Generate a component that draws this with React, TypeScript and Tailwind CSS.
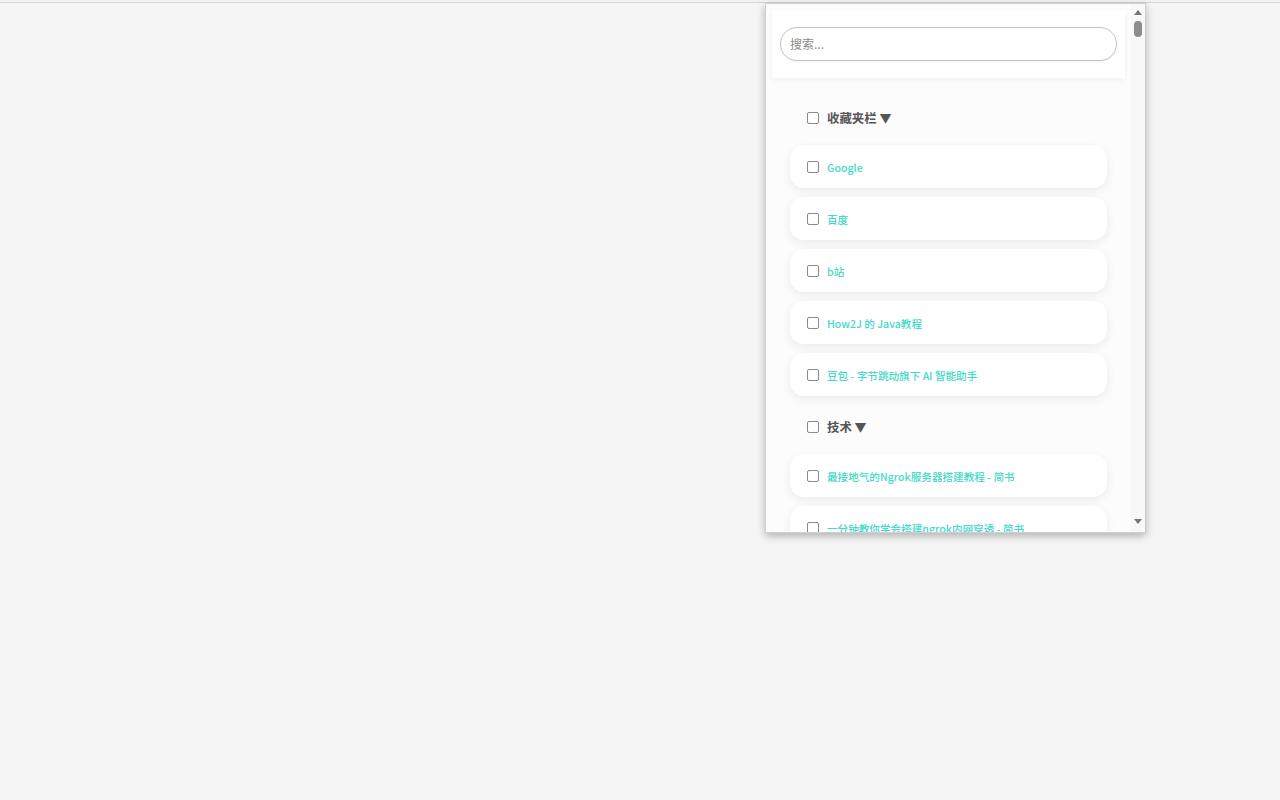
import React from 'react';

type Folder = { title: string; items: string[] };

const folders: Folder[] = [
  {
    title: '收藏夹栏',
    items: ['Google', '百度', 'b站', 'How2J 的 Java教程', '豆包 - 字节跳动旗下 AI 智能助手'],
  },
  {
    title: '技术',
    items: ['最接地气的Ngrok服务器搭建教程 - 简书', '一分钟教你学会搭建ngrok内网穿透 - 简书'],
  },
];

function Check() {
  return (
    <span className="inline-block w-[12px] h-[12px] shrink-0 rounded-[2px] border border-[#8a8a8a] bg-white" />
  );
}

export default function App() {
  return (
    <div
      className="relative w-full h-[800px] bg-[#f5f5f5] overflow-hidden"
      style={{ fontFamily: '"Noto Sans CJK SC", "Noto Sans", sans-serif' }}
    >
      <div className="h-[3px] bg-[#f2f2f2] border-b border-[#d6d6d6]" />

      {/* extension popup */}
      <div className="absolute left-[765px] top-[3px] w-[381px] h-[530px] bg-white border border-[#cfcfcf] shadow-[0_3px_8px_rgba(0,0,0,0.28)] flex">
        <div className="flex-1 h-full overflow-hidden bg-[#fcfcfc] flex flex-col">
          <div className="mx-[6px] mt-[6px] bg-white px-[8px] py-[17px] shadow-[0_2px_6px_rgba(0,0,0,0.05)]">
            <div className="h-[34px] rounded-full border border-[#c4c4c4] bg-white flex items-center px-[9px] shadow-[0_1px_3px_rgba(0,0,0,0.06)]">
              <span className="text-[12px] text-[#8a8a8a]">搜索...</span>
            </div>
          </div>

          <div className="px-[24px] pt-[20px]">
            {folders.map((f, fi) => (
              <div key={f.title} className={fi === 0 ? '' : 'mt-[11px]'}>
                <div className="h-[40px] flex items-center pl-[17px] gap-[8px]">
                  <Check />
                  <span className="text-[12.4px] font-bold text-[#555555]">
                    {f.title} <span className="text-[12px]">▼</span>
                  </span>
                </div>
                <div className="mt-[7px] flex flex-col gap-[9px]">
                  {f.items.map((it) => (
                    <div
                      key={it}
                      className="h-[43px] shrink-0 rounded-[14px] bg-white shadow-[0_3px_10px_rgba(0,0,0,0.07)] flex items-center pl-[17px] gap-[8px]"
                    >
                      <Check />
                      <span className="text-[10.6px] font-medium text-[#45d9c8] pt-[3px]">{it}</span>
                    </div>
                  ))}
                </div>
              </div>
            ))}
          </div>
        </div>

        {/* scrollbar */}
        <div className="w-[14px] h-full bg-[#f8f8f8] flex flex-col items-center pt-[6px] pb-[8px]">
          <svg width="8" height="5" viewBox="0 0 8 5">
            <path d="M0 5 L4 0 L8 5 Z" fill="#777" />
          </svg>
          <div className="mt-[6px] w-[8px] h-[16px] rounded-full bg-[#8c8c8c]" />
          <div className="flex-1" />
          <svg width="8" height="5" viewBox="0 0 8 5">
            <path d="M0 0 L8 0 L4 5 Z" fill="#777" />
          </svg>
        </div>
      </div>
    </div>
  );
}
